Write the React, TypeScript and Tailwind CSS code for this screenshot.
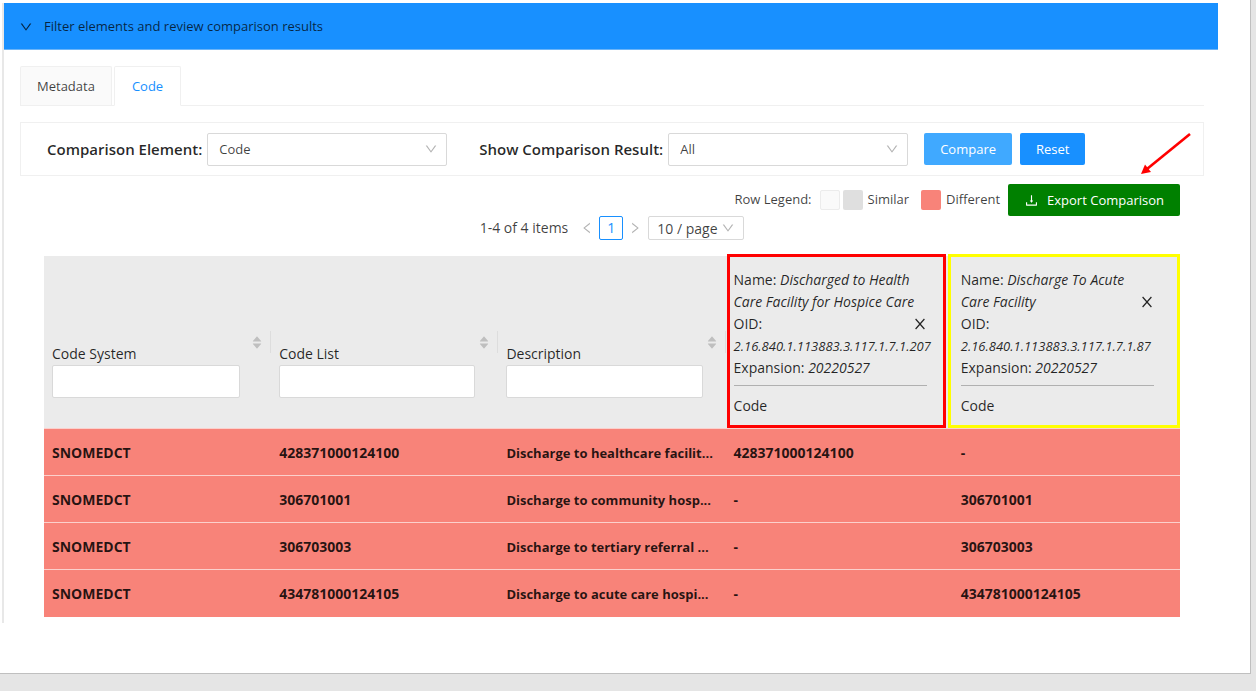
import { useState } from "react";
import {
  AiFillCaretDown,
  AiFillCaretUp,
  AiOutlineDown,
  AiOutlineDownload,
  AiOutlineLeft,
  AiOutlineRight,
} from "react-icons/ai";

interface ResultRow {
  system: string;
  code: string;
  description: string;
  first: string;
  second: string;
}

interface HeaderLine {
  label?: string;
  value?: string;
  oid?: string;
  close?: boolean;
}

const ROWS: ResultRow[] = [
  {
    system: "SNOMEDCT",
    code: "428371000124100",
    description: "Discharge to healthcare facilit...",
    first: "428371000124100",
    second: "-",
  },
  {
    system: "SNOMEDCT",
    code: "306701001",
    description: "Discharge to community hosp...",
    first: "-",
    second: "306701001",
  },
  {
    system: "SNOMEDCT",
    code: "306703003",
    description: "Discharge to tertiary referral ...",
    first: "-",
    second: "306703003",
  },
  {
    system: "SNOMEDCT",
    code: "434781000124105",
    description: "Discharge to acute care hospi...",
    first: "-",
    second: "434781000124105",
  },
];

const HOSPICE_LINES: HeaderLine[] = [
  { label: "Name:", value: "Discharged to Health" },
  { value: "Care Facility for Hospice Care" },
  { label: "OID:", close: true },
  { oid: "2.16.840.1.113883.3.117.1.7.1.207" },
  { label: "Expansion:", value: "20220527" },
];

const ACUTE_LINES: HeaderLine[] = [
  { label: "Name:", value: "Discharge To Acute" },
  { value: "Care Facility", close: true },
  { label: "OID:" },
  { oid: "2.16.840.1.113883.3.117.1.7.1.87" },
  { label: "Expansion:", value: "20220527" },
];

function FilterSelect({ id, label, options }: { id: string; label: string; options: string[] }) {
  return (
    <div className="flex items-center gap-[5px]">
      <label htmlFor={id} className="whitespace-nowrap text-[15px] font-semibold text-black/85">
        {label}
      </label>
      <div className="relative w-60">
        <select
          id={id}
          className="h-[33px] w-full appearance-none rounded-xs border border-[#d9d9d9] bg-white px-[11px] pt-[2px] text-[13px] text-black/75"
        >
          {options.map((o) => (
            <option key={o}>{o}</option>
          ))}
        </select>
        <AiOutlineDown size={14} className="pointer-events-none absolute right-[9px] top-[9px] text-black/30" />
      </div>
    </div>
  );
}

function FilterHeader({ title, narrow }: { title: string; narrow?: boolean }) {
  const id = title.toLowerCase().replace(" ", "-");
  return (
    <th className="p-0 text-left font-medium">
      <div className="flex items-center pl-2">
        <div className={narrow ? "mr-[11px] grow pt-14" : "mr-[3px] grow pt-14"}>
          <label htmlFor={id} className="block pt-px leading-[22px]">
            {title}
          </label>
          <input
            id={id}
            type="text"
            className="block h-[33px] w-full rounded-xs border border-[#d9d9d9] bg-white px-2 font-normal"
          />
        </div>
        <button type="button" aria-label="Sort" className="flex flex-col items-center text-[#bfbfbf]">
          <AiFillCaretUp size={12} className="-mb-[5px]" />
          <AiFillCaretDown size={12} />
        </button>
        <span className="ml-[7px] h-[22px] w-px bg-black/6" />
      </div>
    </th>
  );
}

function ValueSetHeader({ lines, outline }: { lines: HeaderLine[]; outline: string }) {
  return (
    <th className="relative pb-[11px] pl-2 pr-[26px] pt-[13px] text-left font-medium">
      {lines.map((line, i) => (
        <div key={i} className="flex h-[22px] items-center justify-between whitespace-nowrap">
          <span>
            {line.label} {line.value && <em>{line.value}</em>}
            {line.oid && <em className="text-[13px]">{line.oid}</em>}
          </span>
          {line.close && (
            <button type="button" aria-label="Remove" className="pr-px">
              <svg width="12" height="12" viewBox="0 0 12 12" stroke="currentColor" strokeWidth="1.2">
                <path d="M1.6 1 L10.4 11 M10.4 1 L1.6 11" />
              </svg>
            </button>
          )}
        </div>
      ))}
      <hr className="mb-[9px] mt-[6px] border-[#b0b0b0]" />
      <div className="leading-[22px]">Code</div>
      <span className={`pointer-events-none absolute border-3 ${outline}`} />
    </th>
  );
}

export default function App() {
  const [tab, setTab] = useState("Code");

  return (
    <div className="flex min-h-screen flex-col bg-[#e5e5e5] pb-[17px] pr-[5px] font-['Open_Sans',sans-serif] text-[13px] text-black/75">
      <main className="grow border-b border-r border-[#bfbfbf] bg-white pl-[2px] pr-8 pt-[3px]">
        <section className="border-l-2 border-[#e8e8e8] pb-[6px]">
          <button
            type="button"
            className="flex h-[47px] w-full items-center gap-[11px] border-b border-[#6cb4f7] bg-[#1890ff] px-[15px] pt-[2px] text-left text-black/75"
          >
            <AiOutlineDown size={14} />
            Filter elements and review comparison results
          </button>

          <div className="pl-4 pr-[14px] pt-4">
            <nav className="flex gap-[2px] border-b border-[#f0f0f0]">
              {["Metadata", "Code"].map((name) => (
                <button
                  key={name}
                  type="button"
                  onClick={() => setTab(name)}
                  className={
                    tab === name
                      ? "-mb-px h-10 rounded-t-xs border border-b-white border-[#f0f0f0] bg-white px-[17px] pt-[2px] text-[#1890ff]"
                      : "h-[39px] rounded-t-xs border border-b-0 border-[#f0f0f0] bg-[#fafafa] px-4 pt-[2px]"
                  }
                >
                  {name}
                </button>
              ))}
            </nav>

            <div className="relative mt-4 flex h-[54px] items-center border border-[#f0f0f0] pl-[26px]">
              <FilterSelect id="element" label="Comparison Element:" options={["Code"]} />
              <div className="ml-8 mr-4">
                <FilterSelect id="result" label="Show Comparison Result:" options={["All", "Similar", "Different"]} />
              </div>
              <button type="button" className="h-8 rounded-xs bg-[#40a9ff] px-4 pt-px text-white">
                Compare
              </button>
              <button type="button" className="ml-2 h-8 rounded-xs bg-[#1890ff] px-4 pt-px text-white">
                Reset
              </button>
              <svg className="absolute right-[11px] top-[9px]" width="52" height="44" viewBox="0 0 52 44">
                <path d="M50 2 L7 37" stroke="#f00" strokeWidth="2.6" />
                <path d="M1 42 L5 32.5 L11 40 Z" fill="#f00" />
              </svg>
            </div>

            <div className="pl-6 pr-6 pt-2">
              <div className="flex items-start justify-end">
                <div className="flex h-[31px] items-center">
                  <span className="mr-2">Row Legend:</span>
                  <span className="mr-[3px] mt-px size-5 rounded-xs border border-[#ececec] bg-[#fafafa]" />
                  <span className="mr-[5px] mt-px size-5 rounded-xs bg-[#dfdfdf]" />
                  <span className="mr-3">Similar</span>
                  <span className="mr-[5px] mt-px size-5 rounded-xs bg-[#f88379]" />
                  <span className="mr-2">Different</span>
                </div>
                <button
                  type="button"
                  className="flex h-8 items-center gap-2 rounded-xs bg-[#008000] px-4 pt-px text-white"
                >
                  <AiOutlineDownload size={15} />
                  Export Comparison
                </button>
              </div>

              <div className="mb-4 flex h-6 items-center justify-center text-sm">
                <span>1-4 of 4 items</span>
                <button type="button" aria-label="Previous page" className="ml-3 text-black/30">
                  <AiOutlineLeft size={14} />
                </button>
                <button
                  type="button"
                  className="mx-[5px] h-6 w-6 rounded-xs border border-[#1890ff] font-medium text-[#1890ff]"
                >
                  1
                </button>
                <button type="button" aria-label="Next page" className="text-black/30">
                  <AiOutlineRight size={14} />
                </button>
                <div className="relative ml-[6px] w-24">
                  <select
                    aria-label="Page size"
                    className="block h-6 w-full appearance-none rounded-xs border border-[#d9d9d9] bg-white pl-2 pt-px text-sm text-black/75"
                  >
                    <option>10 / page</option>
                    <option>20 / page</option>
                  </select>
                  <AiOutlineDown
                    size={14}
                    className="pointer-events-none absolute right-[9px] top-[5px] text-black/30"
                  />
                </div>
              </div>

              <table className="w-full table-fixed border-collapse text-sm">
                <thead className="bg-[#ebebeb] text-black/85">
                  <tr className="h-[172px]">
                    <FilterHeader title="Code System" narrow />
                    <FilterHeader title="Code List" />
                    <FilterHeader title="Description" />
                    <ValueSetHeader
                      lines={HOSPICE_LINES}
                      outline="-top-[2px] bottom-0 left-[1px] right-[7px] border-[#f00]"
                    />
                    <ValueSetHeader
                      lines={ACUTE_LINES}
                      outline="-top-[2px] bottom-0 -left-[5px] right-0 border-[#ff0]"
                    />
                  </tr>
                </thead>
                <tbody className="font-bold text-black/85">
                  {ROWS.map((row) => (
                    <tr key={row.code} className="h-[47px] border-t border-[#fbd0cc] bg-[#f88379]">
                      <td className="px-2 pt-[2px]">{row.system}</td>
                      <td className="px-2 pt-[2px]">{row.code}</td>
                      <td className="whitespace-nowrap px-2 pt-[2px] text-[13px]">{row.description}</td>
                      <td className="px-2 pt-[2px]">{row.first}</td>
                      <td className="px-2 pt-[2px]">{row.second}</td>
                    </tr>
                  ))}
                </tbody>
              </table>
            </div>
          </div>
        </section>
      </main>
    </div>
  );
}
